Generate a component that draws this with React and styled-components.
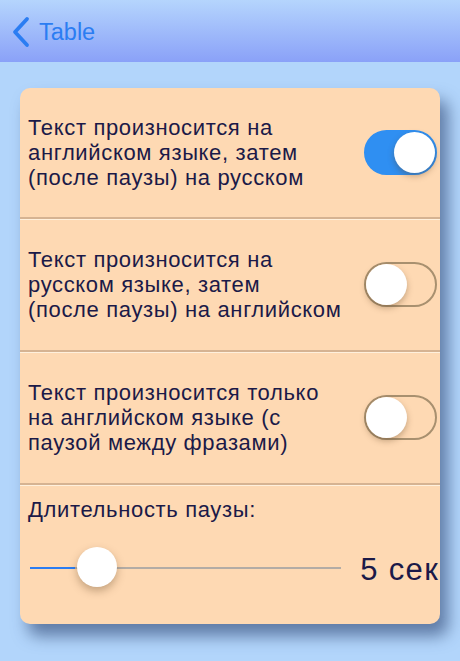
import { useState } from "react"
import styled, { createGlobalStyle } from "styled-components"

const GlobalStyle = createGlobalStyle`
  html, body {
    margin: 0;
    padding: 0;
    background: #b2d5fb;
    font-family: "Liberation Sans", Arial, sans-serif;
  }
`

const Page = styled.div`
  width: 460px;
  height: 661px;
  background: #b2d5fb;
  overflow: hidden;
`

const NavBar = styled.div`
  height: 62px;
  background: linear-gradient(#b5d5fd, #8aa1f8);
  display: flex;
  align-items: center;
  padding-left: 11px;
  padding-top: 2px;
  box-sizing: border-box;
`

const BackButton = styled.div`
  display: flex;
  align-items: center;
  gap: 8px;
  color: #2b7df2;
  font-size: 23.5px;
`

const Content = styled.div`
  padding: 26px 20px 0 20px;
`

const Card = styled.div`
  background: #fed9b3;
  border-radius: 10px;
  box-shadow: 8px 12px 16px rgba(50, 75, 120, 0.65);
  overflow: hidden;
`

const Row = styled.div`
  height: ${(p) => p.h}px;
  display: flex;
  align-items: center;
  justify-content: space-between;
  padding: 0 3px 0 8px;
  border-bottom: 2px solid #d6b392;
  box-shadow: 0 1px 0 #fff0dc;
  box-sizing: border-box;
`

const Label = styled.div`
  font-size: 22px;
  letter-spacing: 0.65px;
  line-height: 25px;
  color: #1b1a48;
  white-space: nowrap;
`

const Track = styled.div`
  width: 73px;
  height: 45px;
  border-radius: 23px;
  box-sizing: border-box;
  background: ${(p) => (p.on ? "#2f8ff2" : "transparent")};
  border: 2px solid ${(p) => (p.on ? "#2f8ff2" : "#a8906f")};
  display: flex;
  align-items: center;
  justify-content: ${(p) => (p.on ? "flex-end" : "flex-start")};
  cursor: pointer;
`

const Knob = styled.div`
  width: 41px;
  height: 41px;
  border-radius: 50%;
  background: #fff;
  box-shadow: 0 3px 6px rgba(90, 60, 30, 0.35);
`

const SliderBlock = styled.div`
  height: 139px;
  padding: 12px 3px 0 8px;
  box-sizing: border-box;
`

const SliderRow = styled.div`
  display: flex;
  align-items: center;
  margin-top: 26px;
`

const SliderTrack = styled.div`
  position: relative;
  width: 311px;
  height: 2px;
  margin-left: 2px;
  background: #b3aca5;
`

const SliderFill = styled.div`
  height: 2px;
  background: #2b7df2;
`

const Thumb = styled.div`
  position: absolute;
  top: -20px;
  width: 40px;
  height: 40px;
  border-radius: 50%;
  background: #fff;
  box-shadow: 0 4px 8px rgba(90, 60, 30, 0.35);
`

const Value = styled.div`
  font-size: 31px;
  letter-spacing: 1.3px;
  color: #1b1a48;
  margin-left: auto;
  margin-right: -2px;
  padding-top: 4px;
`

const Toggle = ({ on, onClick }) => (
  <Track on={on} onClick={onClick}>
    <Knob />
  </Track>
)

const options = [
  ["Текст произносится на", "английском языке, затем", "(после паузы) на русском"],
  ["Текст произносится на", "русском языке, затем", "(после паузы) на английском"],
  ["Текст произносится только", "на английском языке (с", "паузой между фразами)"],
]

const App = () => {
  const [mode, setMode] = useState(0)
  const pause = 5
  const thumbX = 45

  return (
    <>
      <GlobalStyle />
      <Page>
        <NavBar>
          <BackButton>
            <svg width="20" height="32" viewBox="0 0 20 32">
              <path d="M16 3 L4 16 L16 29" fill="none" stroke="#2b7df2" strokeWidth="3.8" strokeLinecap="round" strokeLinejoin="round" />
            </svg>
            Table
          </BackButton>
        </NavBar>
        <Content>
          <Card>
            {options.map((lines, i) => (
              <Row key={i} h={i === 0 ? 131 : 133}>
                <Label>
                  {lines.map((l, j) => (
                    <div key={j}>{l}</div>
                  ))}
                </Label>
                <Toggle on={mode === i} onClick={() => setMode(i)} />
              </Row>
            ))}
            <SliderBlock>
              <Label>Длительность паузы:</Label>
              <SliderRow>
                <SliderTrack>
                  <SliderFill style={{ width: thumbX }} />
                  <Thumb style={{ left: thumbX - 20 + 22 }} />
                </SliderTrack>
                <Value>{pause} сек</Value>
              </SliderRow>
            </SliderBlock>
          </Card>
        </Content>
      </Page>
    </>
  )
}

export default App
